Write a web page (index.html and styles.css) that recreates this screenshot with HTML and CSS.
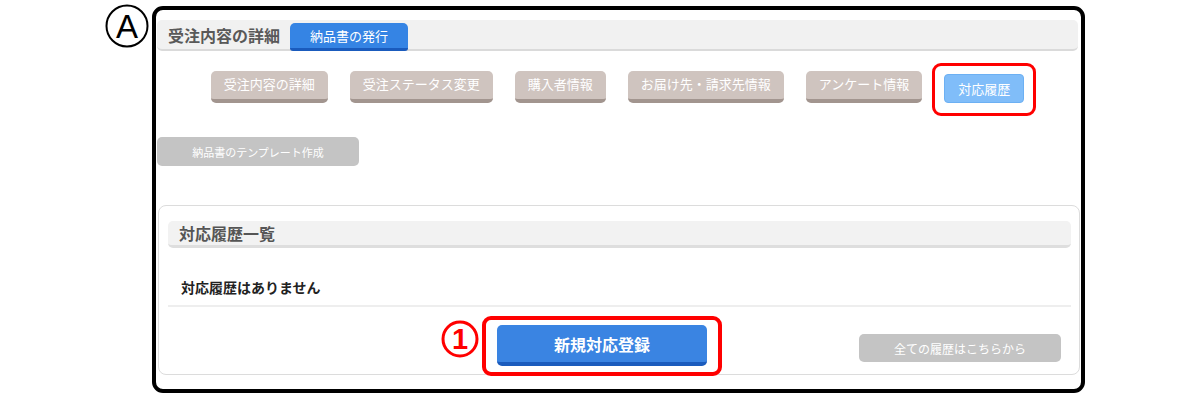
FILE: index.html
```html
<!DOCTYPE html>
<html lang="ja">
<head>
    <meta charset="UTF-8">
    <title>対応履歴</title>
    <link rel="stylesheet" href="styles.css">
</head>
<body>

<div class="page">
    <svg class="marker-a" width="46" height="46" viewBox="0 0 46 46">
        <circle cx="23" cy="23" r="20.5" fill="none" stroke="#000" stroke-width="2"/>
        <text x="23" y="35" text-anchor="middle" font-family="Liberation Sans, sans-serif" font-size="33">A</text>
    </svg>

    <div class="frame">
        <div class="title-bar">
            <h2 class="title">受注内容の詳細</h2>
            <button class="tab-blue">納品書の発行</button>
        </div>

        <div class="nav-row">
            <button class="btn-brown">受注内容の詳細</button>
            <button class="btn-brown">受注ステータス変更</button>
            <button class="btn-brown">購入者情報</button>
            <button class="btn-brown">お届け先・請求先情報</button>
            <button class="btn-brown">アンケート情報</button>
            <span class="highlight hl-nav"><button class="btn-light">対応履歴</button></span>
        </div>

        <div class="tpl-row">
            <button class="btn-gray btn-tpl">納品書のテンプレート作成</button>
        </div>

        <div class="panel">
            <div class="panel-head">対応履歴一覧</div>
            <p class="empty">対応履歴はありません</p>
            <div class="sep"></div>
            <div class="panel-foot">
                <svg class="num" width="38" height="38" viewBox="0 0 38 38">
                    <circle cx="19" cy="19" r="17" fill="none" stroke="#f00" stroke-width="3"/>
                    <text x="19" y="29" text-anchor="middle" fill="#f00" font-family="Liberation Sans, sans-serif" font-weight="bold" font-size="29">1</text>
                </svg>
                <span class="highlight hl-new"><button class="btn-blue">新規対応登録</button></span>
                <button class="btn-gray btn-all">全ての履歴はこちらから</button>
            </div>
        </div>
    </div>
</div>

</body>
</html>
```

FILE: styles.css
```css
body {
    margin: 0;
    background-color: #ffffff;
    font-family: "Noto Sans CJK JP", "Noto Sans", sans-serif;
    color: #333333;
}

button {
    font-family: inherit;
    border: none;
    color: #ffffff;
    cursor: pointer;
    white-space: nowrap;
}

.page {
    position: relative;
    padding: 6px 0 0 152px;
}

.marker-a {
    position: absolute;
    left: 104px;
    top: 3px;
}

.frame {
    width: 933px;
    box-sizing: border-box;
    border: 4px solid #000000;
    border-radius: 11px;
    padding: 10px 3px 14px 1px;
}

/* top title bar */
.title-bar {
    display: flex;
    align-items: center;
    height: 29px;
    background-color: #f1f1f1;
    border-bottom: 2px solid #dadada;
    border-radius: 5px;
    padding-left: 11px;
}

.title {
    margin: 0 10px 0 0;
    font-size: 16px;
    font-weight: bold;
    color: #595959;
    line-height: 20px;
}

.tab-blue {
    align-self: flex-end;
    margin-bottom: -2px;
    height: 28px;
    padding: 0 20px;
    font-size: 13px;
    background-color: #3584e4;
    border-bottom: 3px solid #1a5bbd;
    border-radius: 5px 5px 3px 3px;
}

/* menu buttons */
.nav-row {
    display: flex;
    align-items: flex-end;
    justify-content: center;
    gap: 22px;
    margin-top: 20px;
}

.btn-brown {
    height: 32px;
    padding: 0 13px 3px;
    font-size: 13px;
    background-color: #cfc4bf;
    border-bottom: 4px solid #a2958f;
    border-radius: 5px;
}

.highlight {
    position: relative;
    display: flex;
}

.highlight::before {
    content: "";
    position: absolute;
    border: 3px solid #ff0000;
    border-radius: 9px;
}

.hl-nav::before {
    inset: -11px -12px -13px -12px;
}

.btn-light {
    height: 29px;
    padding: 0 13px;
    font-size: 13px;
    background-color: #80bdf9;
    border: 1px solid #6cb0f3;
    border-radius: 4px;
}

.tpl-row {
    margin-top: 34px;
}

.btn-gray {
    background-color: #c4c4c4;
    border-radius: 5px;
}

.btn-tpl {
    width: 202px;
    height: 29px;
    font-size: 11px;
}

/* history panel */
.panel {
    margin: 39px -2px 0 1px;
    border: 1px solid #dcdcdc;
    border-radius: 8px;
    padding: 15px 8px 8px 9px;
}

.panel-head {
    height: 24px;
    line-height: 24px;
    padding-left: 11px;
    font-size: 16px;
    font-weight: bold;
    color: #555555;
    background-color: #f2f2f2;
    border-bottom: 3px solid #dedede;
    border-radius: 5px;
}

.empty {
    margin: 29px 0 0 13px;
    font-size: 14px;
    font-weight: bold;
    line-height: 20px;
    color: #222222;
}

.sep {
    margin-top: 8px;
    height: 2px;
    background-color: #eeeeee;
}

.panel-foot {
    display: flex;
    align-items: flex-start;
    margin-top: 13px;
    padding-left: 273px;
}

.num {
    display: block;
    margin-right: 18px;
}

.hl-new {
    margin-top: 5px;
}

.hl-new::before {
    inset: -9px -15px -10px -15px;
    border-width: 4px;
}

.btn-blue {
    width: 210px;
    height: 41px;
    font-size: 16px;
    font-weight: bold;
    background-color: #3a84e2;
    border-bottom: 4px solid #1b5cbd;
    border-radius: 5px;
}

.btn-all {
    margin: 14px 10px 0 auto;
    width: 202px;
    height: 28px;
    font-size: 12px;
}
```
